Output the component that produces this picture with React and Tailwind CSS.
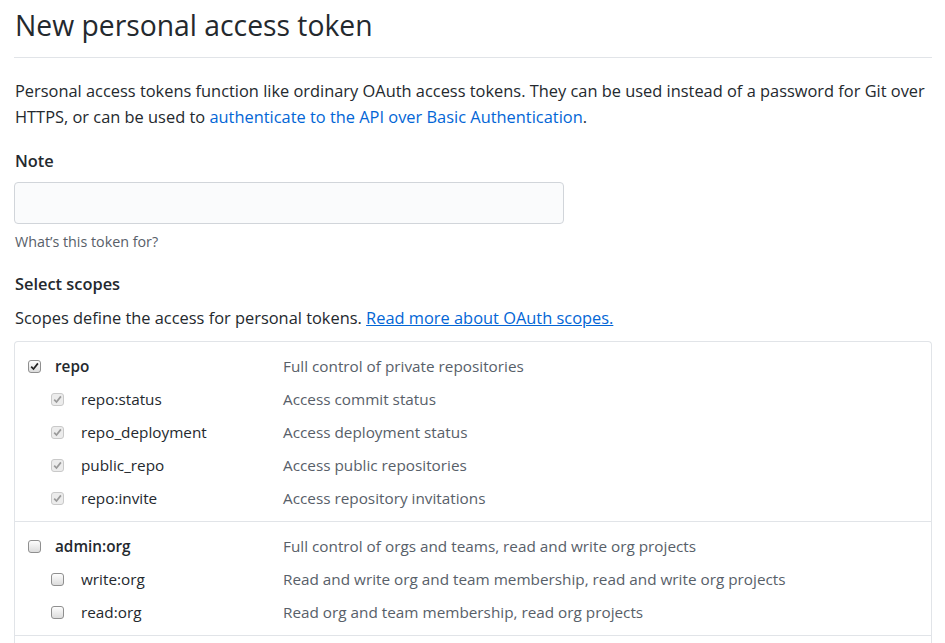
import React from 'react';

const scopeGroups = [
  {
    name: 'repo',
    checked: true,
    description: 'Full control of private repositories',
    children: [
      { name: 'repo:status', description: 'Access commit status' },
      { name: 'repo_deployment', description: 'Access deployment status' },
      { name: 'public_repo', description: 'Access public repositories' },
      { name: 'repo:invite', description: 'Access repository invitations' },
    ],
  },
  {
    name: 'admin:org',
    checked: false,
    description: 'Full control of orgs and teams, read and write org projects',
    children: [
      { name: 'write:org', description: 'Read and write org and team membership, read and write org projects' },
      { name: 'read:org', description: 'Read org and team membership, read org projects' },
    ],
  },
];

// old windows-ish checkbox
const Checkbox = ({ checked, disabled }) => (
  <span
    className={`flex h-[13px] w-[13px] shrink-0 items-center justify-center rounded-[3px] border ${
      disabled
        ? 'border-[#c9c9c9] bg-[#ececec]'
        : 'border-[#8f8f8f] bg-gradient-to-b from-[#fdfdfd] to-[#dcdcdc]'
    }`}
  >
    {checked && (
      <svg width="9" height="9" viewBox="0 0 9 9">
        <path
          d="M1.2 4.6 L3.5 7 L7.9 1.4"
          fill="none"
          stroke={disabled ? '#9a9a9a' : '#222'}
          strokeWidth="1.7"
        />
      </svg>
    )}
  </span>
);

const ScopeRow = ({ name, description, checked, disabled, child }) => (
  <div className="flex h-[33px] items-center text-[15.3px]">
    <div className={`flex w-[268px] shrink-0 items-center ${child ? 'pl-[36px]' : 'pl-[13px]'}`}>
      <Checkbox checked={checked} disabled={disabled} />
      <span className={`${child ? 'ml-[17px]' : 'ml-[14px] font-semibold'} text-[#24292e]`}>{name}</span>
    </div>
    <div className="text-[#586069]">{description}</div>
  </div>
);

export default function App() {
  return (
    <div
      className="min-h-screen bg-white px-[14px] text-[16.4px] text-[#24292e]"
      style={{ fontFamily: '"Open Sans", "Liberation Sans", sans-serif' }}
    >
      <div className="w-[918px]">
        {/* Header */}
        <div className="border-b border-[#e1e4e8] pb-[10px] pt-[3px]">
          <h1 className="pl-px text-[28.3px] font-normal leading-[44px]">New personal access token</h1>
        </div>

        <p className="mt-[20px] pl-px leading-[26px]">
          Personal access tokens function like ordinary OAuth access tokens. They can be used instead of a password for Git
          over HTTPS, or can be used to{' '}
          <a className="text-[#0366d6]">authenticate to the API over Basic Authentication</a>.
        </p>

        {/* Note */}
        <div className="mt-[19px]">
          <div className="pl-px font-semibold leading-[24px]">Note</div>
          <div className="mt-[9px] h-[42px] w-[550px] rounded-[4px] border border-[#d1d5da] bg-[#fafbfc]" />
          <div className="mt-[8px] pl-px text-[14.3px] leading-[20px] text-[#586069]">What’s this token for?</div>
        </div>

        {/* Scopes */}
        <div className="mt-[20px]">
          <div className="pl-px font-semibold leading-[24px]">Select scopes</div>
          <p className="mt-[10px] pl-px leading-[24px]">
            Scopes define the access for personal tokens.{' '}
            <a className="text-[#0366d6] underline">Read more about OAuth scopes.</a>
          </p>
          <div className="mt-[11px] rounded-t-[4px] border border-b-0 border-[#e1e4e8]">
            {scopeGroups.map((group) => (
              <div key={group.name} className="border-b border-[#e1e4e8] pb-[6px] pt-[8px]">
                <ScopeRow name={group.name} description={group.description} checked={group.checked} />
                {group.children.map((c) => (
                  <ScopeRow
                    key={c.name}
                    name={c.name}
                    description={c.description}
                    checked={group.checked}
                    disabled={group.checked}
                    child
                  />
                ))}
              </div>
            ))}
            <div className="h-[20px]" />
          </div>
        </div>
      </div>
    </div>
  );
}
